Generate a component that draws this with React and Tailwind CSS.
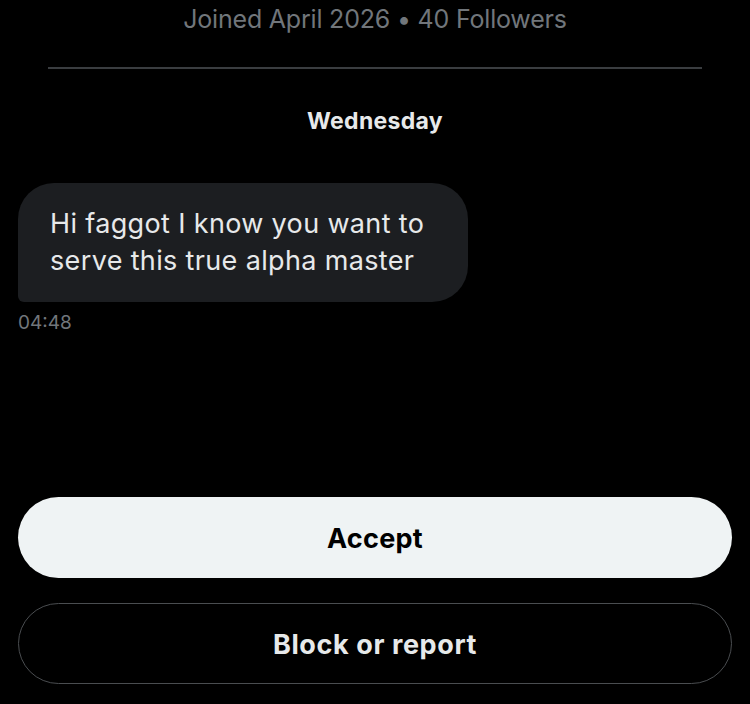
import React from 'react';

export default function App() {
  return (
    <div
      className="w-[750px] h-[704px] bg-black overflow-hidden flex flex-col"
      style={{ fontFamily: 'Inter, "Liberation Sans", sans-serif' }}
    >
      <div className="h-[40px] flex items-center justify-center text-[#71767b] text-[25px] tracking-[-0.2px]">
        Joined April 2026 • 40 Followers
      </div>

      <div className="mx-[48px] mt-[27px] h-[2px] bg-[#3a3d40]" />

      <div className="mt-[38px] text-center text-[#e7e9ea] text-[23px] tracking-[0.3px] font-bold leading-[28px]">
        Wednesday
      </div>

      <div className="mt-[48px] px-[18px]">
        <div className="w-[450px] h-[119px] bg-[#1c1e21] rounded-[36px] rounded-bl-[6px] px-[32px] pt-[22px] text-[#e7e9ea] text-[27px] tracking-[0.35px] leading-[37px]">
          Hi faggot I know you want to serve this true alpha master
        </div>
        <div className="mt-[9px] text-[#71767b] text-[19px] leading-[24px]">04:48</div>
      </div>

      <div className="flex-1" />

      <div className="px-[18px] pb-[20px] flex flex-col gap-[25px]">
        <button className="h-[81px] w-full pt-[4px] rounded-full bg-[#eff3f4] text-black text-[27px] tracking-[0.3px] font-bold">
          Accept
        </button>
        <button className="h-[81px] w-full pt-[4px] rounded-full border border-[#4a4d50] text-[#e7e9ea] text-[27px] tracking-[0.6px] font-bold">
          Block or report
        </button>
      </div>
    </div>
  );
}
